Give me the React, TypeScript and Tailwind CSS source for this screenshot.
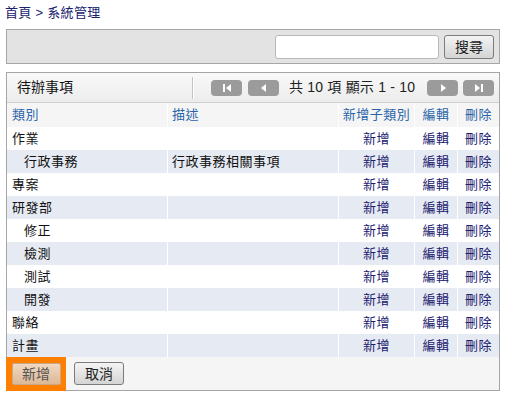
import React from "react";

type Row = { name: string; desc?: string; child?: boolean };

const rows: Row[] = [
  { name: "作業" },
  { name: "行政事務", desc: "行政事務相關事項", child: true },
  { name: "專案" },
  { name: "研發部" },
  { name: "修正", child: true },
  { name: "檢測", child: true },
  { name: "測試", child: true },
  { name: "開發", child: true },
  { name: "聯絡" },
  { name: "計畫" },
];

function PagerButton({ kind }: { kind: "first" | "prev" | "next" | "last" }) {
  return (
    <div className="w-[31px] h-[16px] rounded-[4px] bg-[#9b9b9b] flex items-center justify-center">
      <svg width="12" height="10" viewBox="0 0 12 10">
        {kind === "first" && (
          <>
            <rect x="2" y="1" width="2" height="8" fill="#fff" />
            <polygon points="10,1 10,9 5,5" fill="#fff" />
          </>
        )}
        {kind === "prev" && <polygon points="8,1 8,9 3,5" fill="#fff" />}
        {kind === "next" && <polygon points="4,1 4,9 9,5" fill="#fff" />}
        {kind === "last" && (
          <>
            <polygon points="2,1 2,9 7,5" fill="#fff" />
            <rect x="8" y="1" width="2" height="8" fill="#fff" />
          </>
        )}
      </svg>
    </div>
  );
}

export default function App() {
  const cols = "grid grid-cols-[160px_171px_76px_43px_42px]";
  return (
    <div
      className="w-[506px] h-[393px] bg-white text-[13px] text-[#111]"
      style={{ fontFamily: '"Liberation Sans", Arial, "Noto Sans CJK TC", sans-serif' }}
    >
      {/* breadcrumb */}
      <div className="h-[29px] pl-[5px] pt-[4px] text-[#1a2270] leading-[18px] tracking-[0.3px]">
        首頁 &gt; 系統管理
      </div>

      {/* search bar */}
      <div className="mx-[6px] h-[35px] border border-[#a6a6a6] bg-[#e3e3e3] flex items-center justify-end gap-[5px] pr-[5px]">
        <div className="w-[164px] h-[24px] rounded-[3px] border border-[#b8b8b8] bg-white" />
        <button className="w-[50px] h-[24px] rounded-[3px] border border-[#7c7c7c] bg-gradient-to-b from-[#f4f4f4] to-[#d4d4d4] text-[14px] text-[#222] leading-none">
          搜尋
        </button>
      </div>

      {/* list panel */}
      <div className="mx-[6px] mt-[8px] w-[494px] h-[319px] border border-[#a6a6a6] flex flex-col">
        {/* title bar */}
        <div className="h-[30px] shrink-0 flex items-center bg-gradient-to-b from-[#f9f9f9] to-[#ececec] border-b border-[#d0d0d0]">
          <div className="w-[185px] pl-[10px] text-[14px] text-[#111]">待辦事項</div>
          <div className="w-[2px] h-[22px] border-l border-[#c4c4c4] border-r border-r-white" />
          <div className="ml-[17px] flex items-center gap-[6px]">
            <PagerButton kind="first" />
            <PagerButton kind="prev" />
          </div>
          <div className="ml-[10px] w-[138px] text-[14px] text-[#222] whitespace-nowrap tracking-[0.2px]">共 10 項 顯示 1 - 10</div>
          <div className="flex items-center gap-[5px]">
            <PagerButton kind="next" />
            <PagerButton kind="last" />
          </div>
        </div>

        {/* column headers */}
        <div className={`${cols} h-[24px] shrink-0 bg-[#f5f5f5] text-[#2a64a8] items-stretch tracking-[0.5px]`}>
          <div className="pl-[5px] flex items-center">類別</div>
          <div className="pl-[4px] flex items-center border-l border-white">描述</div>
          <div className="flex items-center justify-center border-l border-white">新增子類別</div>
          <div className="flex items-center justify-center border-l border-white">編輯</div>
          <div className="flex items-center justify-center border-l border-white">刪除</div>
        </div>

        {/* rows */}
        {rows.map((r, i) => (
          <div
            key={r.name}
            className={`${cols} h-[23px] shrink-0 items-stretch tracking-[0.5px] ${i % 2 === 1 ? "bg-[#e6eaf2]" : "bg-white"}`}
          >
            <div className={`flex items-center ${r.child ? "pl-[17px]" : "pl-[5px]"}`}>{r.name}</div>
            <div className="pl-[4px] flex items-center border-l border-white">{r.desc}</div>
            <div className="flex items-center justify-center border-l border-white text-[#20206e]">新增</div>
            <div className="flex items-center justify-center border-l border-white text-[#20206e]">編輯</div>
            <div className="flex items-center justify-center border-l border-white text-[#20206e]">刪除</div>
          </div>
        ))}

        {/* footer */}
        <div className="flex-1 bg-[#f5f5f5] flex items-stretch">
          <div className="-ml-[1px] -mb-[1px] w-[60px] bg-[#ff8000] flex items-center justify-center">
            <button className="w-[49px] h-[22px] rounded-[2px] border border-[#c9a88a] bg-gradient-to-b from-[#f0d8c2] to-[#dcb896] text-[14px] text-[#555] leading-none">
              新增
            </button>
          </div>
          <div className="ml-[8px] flex items-center">
            <button className="w-[50px] h-[23px] rounded-[3px] border border-[#7c7c7c] bg-gradient-to-b from-[#f4f4f4] to-[#d4d4d4] text-[14px] text-[#222] leading-none">
              取消
            </button>
          </div>
        </div>
      </div>
    </div>
  );
}
